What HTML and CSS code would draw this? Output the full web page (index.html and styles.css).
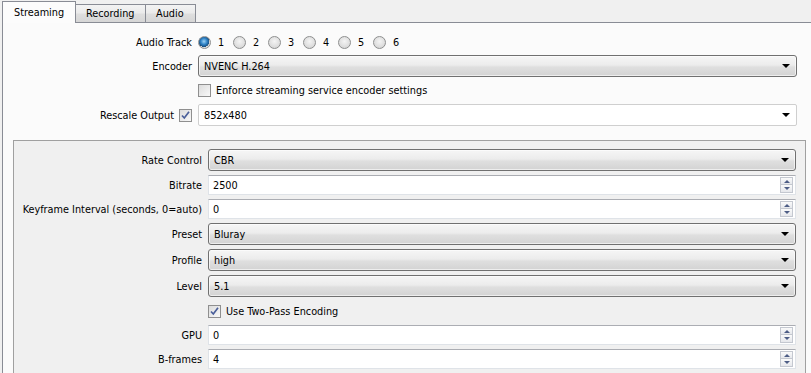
FILE: index.html
```html
<!DOCTYPE html>
<html>
<head>
<meta charset="utf-8">
<link rel="stylesheet" href="styles.css">
</head>
<body>
<div class="tabs">
  <div class="tab active w1">Streaming</div>
  <div class="tab w2">Recording</div>
  <div class="tab w3">Audio</div>
</div>
<div class="pane">
  <div class="form top">
    <div class="label">Audio Track</div>
    <div class="radios">
      <span class="radio on"></span><span class="rlabel">1</span>
      <span class="radio"></span><span class="rlabel">2</span>
      <span class="radio"></span><span class="rlabel">3</span>
      <span class="radio"></span><span class="rlabel">4</span>
      <span class="radio"></span><span class="rlabel">5</span>
      <span class="radio"></span><span class="rlabel">6</span>
    </div>

    <div class="label">Encoder</div>
    <div class="combo"><span>NVENC H.264</span><i class="arrow"></i></div>

    <div class="label"></div>
    <div class="checkrow"><span class="check"></span><span>Enforce streaming service encoder settings</span></div>

    <div class="label">Rescale Output <span class="check on"><svg width="11" height="11" viewBox="0 0 11 11"><path d="M2 5.5 L4.3 8 L9 1.8" fill="none" stroke="#4a5f9a" stroke-width="1.7"/></svg></span></div>
    <div class="combo edit"><span>852x480</span><i class="arrow"></i></div>
  </div>

  <div class="group">
    <div class="form inner">
      <div class="label">Rate Control</div>
      <div class="combo"><span>CBR</span><i class="arrow"></i></div>

      <div class="label">Bitrate</div>
      <div class="spinbox"><span>2500</span><span class="spin"><b class="up"></b><b class="dn"></b></span></div>

      <div class="label">Keyframe Interval (seconds, 0=auto)</div>
      <div class="spinbox"><span>0</span><span class="spin"><b class="up"></b><b class="dn"></b></span></div>

      <div class="label">Preset</div>
      <div class="combo"><span>Bluray</span><i class="arrow"></i></div>

      <div class="label">Profile</div>
      <div class="combo"><span>high</span><i class="arrow"></i></div>

      <div class="label">Level</div>
      <div class="combo"><span>5.1</span><i class="arrow"></i></div>

      <div class="label"></div>
      <div class="checkrow"><span class="check on"><svg width="11" height="11" viewBox="0 0 11 11"><path d="M2 5.5 L4.3 8 L9 1.8" fill="none" stroke="#4a5f9a" stroke-width="1.7"/></svg></span><span>Use Two-Pass Encoding</span></div>

      <div class="label">GPU</div>
      <div class="spinbox"><span>0</span><span class="spin"><b class="up"></b><b class="dn"></b></span></div>

      <div class="label">B-frames</div>
      <div class="spinbox"><span>4</span><span class="spin"><b class="up"></b><b class="dn"></b></span></div>
    </div>
  </div>
</div>
</body>
</html>
```
FILE: styles.css
```css
html, body {
  margin: 0;
  padding: 0;
  width: 811px;
  height: 373px;
  overflow: hidden;
  background: #f0f0f0;
  font-family: "DejaVu Sans Condensed", "DejaVu Sans", sans-serif;
  font-stretch: condensed;
  font-size: 10.8px;
  color: #000;
}

.tabs {
  display: flex;
  align-items: flex-end;
  height: 22px;
  padding-left: 2px;
  position: relative;
  z-index: 2;
}

.tab {
  box-sizing: border-box;
  height: 18px;
  border: 1px solid #898c95;
  border-bottom: none;
  background: linear-gradient(#f3f3f3, #ebebeb 45%, #dedede 55%, #d6d6d6);
  padding-left: 10px;
  line-height: 17px;
  margin-left: -1px;
}
.tab:first-child { margin-left: 0; }
.tab.active {
  height: 22px;
  margin-bottom: -1px;
  background: #fcfcfc;
  line-height: 21px;
  padding-left: 11px;
  position: relative;
  z-index: 3;
}
.w1 { width: 74px; }
.w2 { width: 71px; }
.w3 { width: 51px; }

.pane {
  box-sizing: border-box;
  margin-left: 2px;
  width: 830px;
  height: 360px;
  border-top: 1px solid #898c95;
  border-left: 1px solid #898c95;
  background: #fbfbfb;
  padding-top: 9px;
}

.form {
  display: grid;
  column-gap: 6px;
  align-items: center;
}
.form.top {
  grid-template-columns: 189px 599px;
  grid-template-rows: 20px 22px 21px 22px;
  row-gap: 3px;
}
.form.inner {
  grid-template-columns: 188px 588px;
  grid-template-rows: 22px 20px 20px 22px 22px 22px 20px 20px 20px;
  row-gap: 4px;
}

.label {
  display: flex;
  justify-content: flex-end;
  align-items: center;
  white-space: nowrap;
}

.radios {
  display: flex;
  align-items: center;
}
.radio {
  box-sizing: border-box;
  width: 13px;
  height: 13px;
  border-radius: 50%;
  border: 1px solid #8e8f8f;
  background: radial-gradient(circle at 50% 40%, #f4f4f4 0, #e0e0e0 55%, #cfcfcf 100%);
  position: relative;
}
.radio.on {
  background: radial-gradient(circle at 45% 40%, #9fd3f5 0, #2f83c7 35%, #1a4f7f 60%, #d8d8d8 62%, #eeeeee 100%);
}
.rlabel {
  width: 22px;
  padding-left: 7px;
  box-sizing: border-box;
}

.combo {
  box-sizing: border-box;
  height: 22px;
  border: 1px solid #707070;
  border-radius: 3px;
  background: linear-gradient(#f6f6f6, #ececec 45%, #dfdfdf 55%, #d3d3d3);
  display: flex;
  align-items: center;
  justify-content: space-between;
  padding: 0 6px 0 5px;
  box-shadow: inset 0 0 0 1px rgba(255,255,255,0.6);
}
.combo.edit {
  background: #fff;
  border: 1px solid #cfcfcf;
  border-radius: 2px;
  box-shadow: none;
}
.arrow {
  width: 0;
  height: 0;
  border-left: 4px solid transparent;
  border-right: 4px solid transparent;
  border-top: 4px solid #000;
}

.checkrow {
  display: flex;
  align-items: center;
}
.check {
  box-sizing: border-box;
  width: 13px;
  height: 13px;
  border: 1px solid #8f8f8f;
  background: linear-gradient(135deg, #dcdcdc, #f8f8f8);
  display: inline-flex;
  align-items: center;
  justify-content: center;
  margin-right: 5px;
}
.label .check {
  margin-left: 5px;
  margin-right: 0;
}

.spinbox {
  box-sizing: border-box;
  height: 20px;
  border: 1px solid #dfe3e8;
  border-top-color: #abadb3;
  background: #fff;
  display: flex;
  align-items: center;
  justify-content: space-between;
  padding-left: 4px;
  padding-right: 2px;
}
.spin {
  display: flex;
  flex-direction: column;
}
.spin b {
  box-sizing: border-box;
  width: 13px;
  height: 8px;
  border: 1px solid #c4c8d0;
  background: linear-gradient(#fafafa, #e6e8ec);
  display: flex;
  align-items: center;
  justify-content: center;
}
.spin b.dn { border-top: none; }
.spin b::after {
  content: "";
  width: 0;
  height: 0;
  border-left: 3px solid transparent;
  border-right: 3px solid transparent;
}
.spin b.up::after { border-bottom: 3px solid #4d5d85; }
.spin b.dn::after { border-top: 3px solid #4d5d85; }

.group {
  box-sizing: border-box;
  margin-top: 14px;
  margin-left: 10px;
  width: 793px;
  height: 240px;
  border: 1px solid #a0a0a0;
  background: #f0f0f0;
  padding-top: 8px;
}
```
